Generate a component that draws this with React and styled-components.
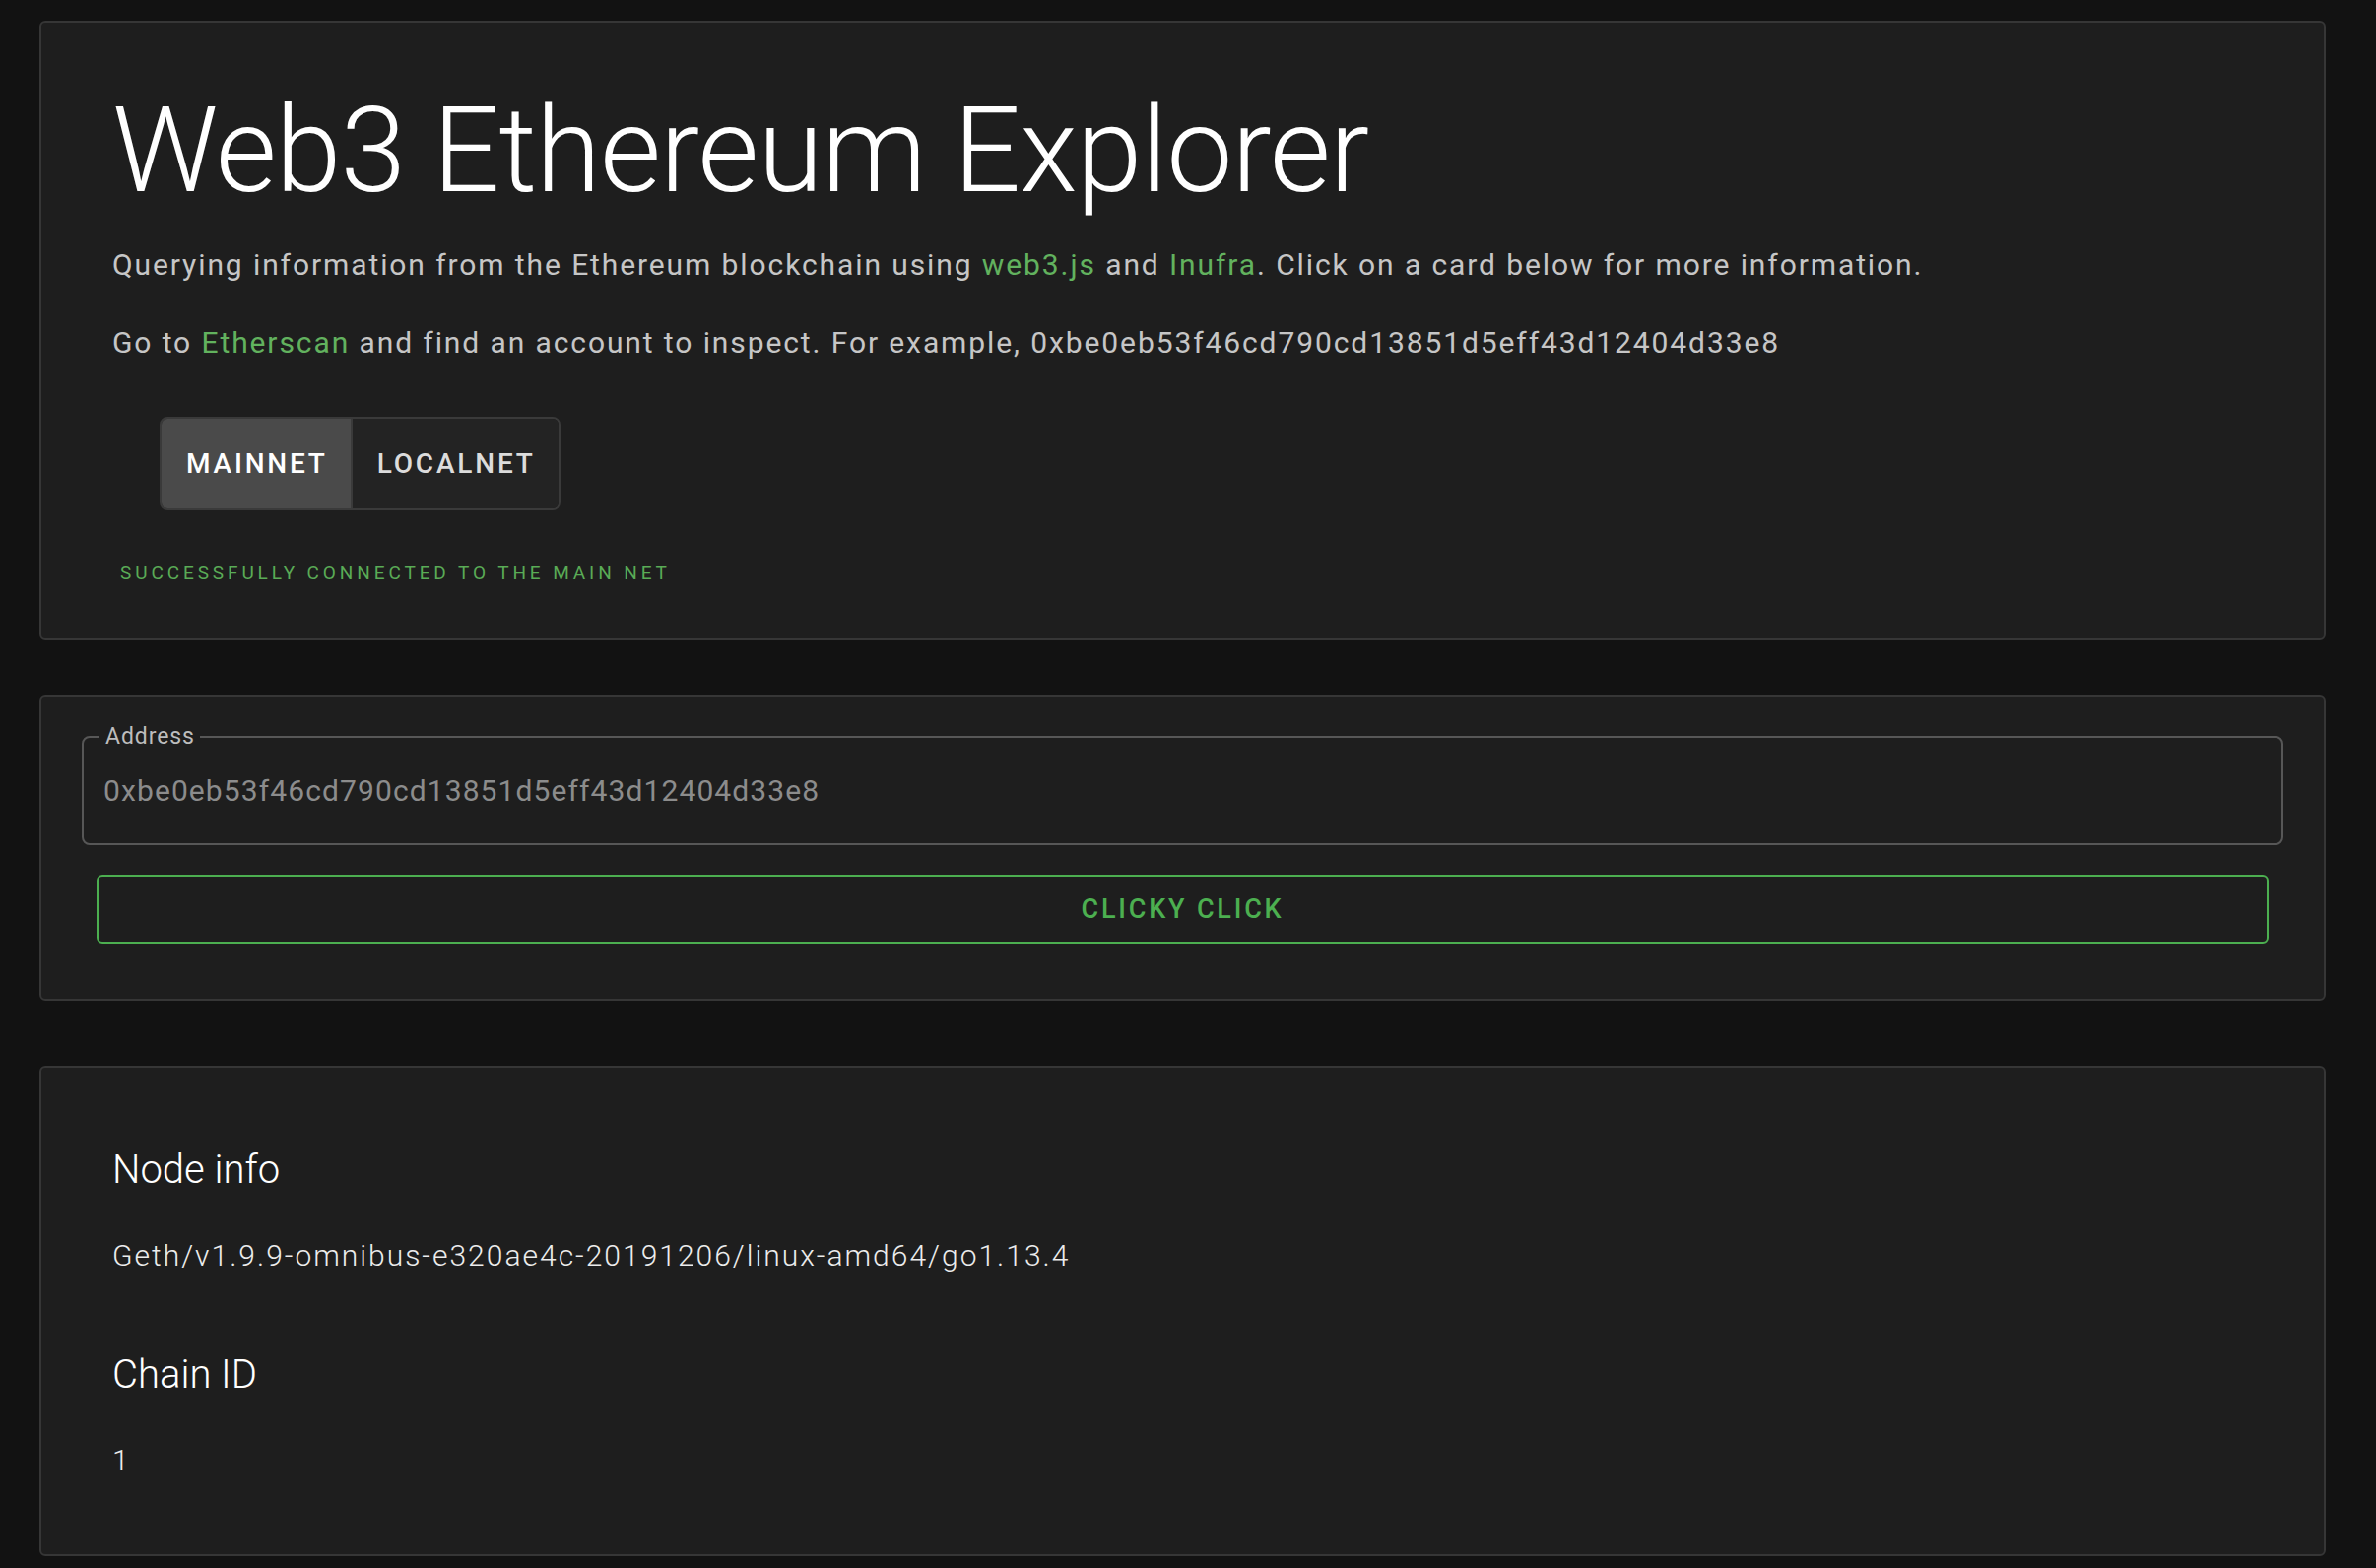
import React, { useState } from "react";
import styled, { createGlobalStyle } from "styled-components";

const GlobalStyle = createGlobalStyle`
  html, body {
    margin: 0;
    padding: 0;
    background-color: #121212;
  }
  body {
    font-family: Roboto, "Liberation Sans", sans-serif;
    color: #ffffff;
  }
`;

const Page = styled.div`
  padding: 21px 51px 13px 40px;
  display: flex;
  flex-direction: column;
`;

const Card = styled.section`
  background-color: #1e1e1e;
  border: 2px solid #363636;
  border-radius: 6px;
  margin-bottom: ${(props) => props.$gap || 0}px;
`;

const HeaderCard = styled(Card)`
  padding: 60px 72px 51px 72px;
`;

const SearchCard = styled(Card)`
  padding: 29px 41px 56px 41px;
`;

const InfoCard = styled(Card)`
  padding: 80px 72px 73px 72px;
`;

const Title = styled.h1`
  margin: 0 0 23px 0;
  font-size: 120px;
  line-height: 140px;
  font-weight: 300;
  letter-spacing: -1px;
  color: #ffffff;
`;

const Lead = styled.p`
  margin: 0 0 ${(props) => props.$mb || 0}px 0;
  font-size: 30px;
  line-height: 45px;
  font-weight: 400;
  letter-spacing: 1.9px;
  color: #c6c6c6;
`;

const GreenLink = styled.a`
  color: #62b25e;
  text-decoration: none;
`;

const ToggleGroup = styled.div`
  display: inline-flex;
  align-self: flex-start;
  margin: 53px 0 0 48px;
  border: 2px solid #3a3a3a;
  border-radius: 8px;
  overflow: hidden;
`;

const ToggleButton = styled.button`
  height: 91px;
  padding: 0 23px 0 25px;
  border: none;
  border-left: ${(props) => (props.$first ? "none" : "2px solid #3a3a3a")};
  background-color: ${(props) => (props.$active ? "#4a4a4a" : "#232323")};
  color: ${(props) => (props.$active ? "#ffffff" : "#dcdcdc")};
  font-family: Roboto, "Liberation Sans", sans-serif;
  font-size: 28px;
  font-weight: 500;
  letter-spacing: 2.8px;
  text-transform: uppercase;
  cursor: pointer;
`;

const HeaderBody = styled.div`
  display: flex;
  flex-direction: column;
`;

const Status = styled.div`
  margin: 49px 0 0 8px;
  font-size: 19px;
  line-height: 30px;
  letter-spacing: 3.9px;
  text-transform: uppercase;
  color: #5aab56;
`;

const Field = styled.fieldset`
  margin: 0;
  padding: 0 16px 31px 16px;
  border: 2px solid #575757;
  border-radius: 8px;
`;

const Legend = styled.legend`
  padding: 0 5px 0 6px;
  font-size: 23px;
  line-height: 22px;
  color: #bdbdbd;
  letter-spacing: 0.9px;
`;

const FieldValue = styled.div`
  margin-top: 21px;
  padding-left: 4px;
  font-size: 30px;
  line-height: 45px;
  color: #8c8c8c;
  letter-spacing: 1.1px;
`;

const OutlineButton = styled.button`
  display: block;
  width: calc(100% - 30px);
  height: 70px;
  margin: 30px 15px 0 15px;
  background: transparent;
  border: 2px solid #4caf50;
  border-radius: 6px;
  color: #4caf50;
  font-family: Roboto, "Liberation Sans", sans-serif;
  font-size: 27px;
  font-weight: 500;
  letter-spacing: 2.8px;
  text-transform: uppercase;
  cursor: pointer;
`;

const InfoTitle = styled.h2`
  margin: 0;
  font-size: 40px;
  line-height: 48px;
  font-weight: 300;
  color: #ffffff;
`;

const InfoValue = styled.div`
  margin: 40px 0 ${(props) => props.$mb || 0}px 0;
  font-size: 30px;
  line-height: 45px;
  font-weight: 300;
  letter-spacing: 2px;
  color: #ececec;
`;

const ADDRESS = "0xbe0eb53f46cd790cd13851d5eff43d12404d33e8";

export default function App() {
  const [net, setNet] = useState("mainnet");

  return (
    <>
      <GlobalStyle />
      <Page>
        <HeaderCard $gap={56}>
          <HeaderBody>
            <Title>Web3 Ethereum Explorer</Title>
            <Lead $mb={34}>
              Querying information from the Ethereum blockchain using{" "}
              <GreenLink href="#">web3.js</GreenLink> and{" "}
              <GreenLink href="#">Inufra</GreenLink>. Click on a card below for
              more information.
            </Lead>
            <Lead>
              Go to <GreenLink href="#">Etherscan</GreenLink> and find an
              account to inspect. For example, {ADDRESS}
            </Lead>
            <ToggleGroup>
              <ToggleButton
                $first
                $active={net === "mainnet"}
                onClick={() => setNet("mainnet")}
              >
                Mainnet
              </ToggleButton>
              <ToggleButton
                $active={net === "localnet"}
                onClick={() => setNet("localnet")}
              >
                Localnet
              </ToggleButton>
            </ToggleGroup>
            <Status>Successfully connected to the main net</Status>
          </HeaderBody>
        </HeaderCard>

        <SearchCard $gap={66}>
          <Field>
            <Legend>Address</Legend>
            <FieldValue>{ADDRESS}</FieldValue>
          </Field>
          <OutlineButton>Clicky click</OutlineButton>
        </SearchCard>

        <InfoCard>
          <InfoTitle>Node info</InfoTitle>
          <InfoValue $mb={75}>
            Geth/v1.9.9-omnibus-e320ae4c-20191206/linux-amd64/go1.13.4
          </InfoValue>
          <InfoTitle>Chain ID</InfoTitle>
          <InfoValue>1</InfoValue>
        </InfoCard>
      </Page>
    </>
  );
}
